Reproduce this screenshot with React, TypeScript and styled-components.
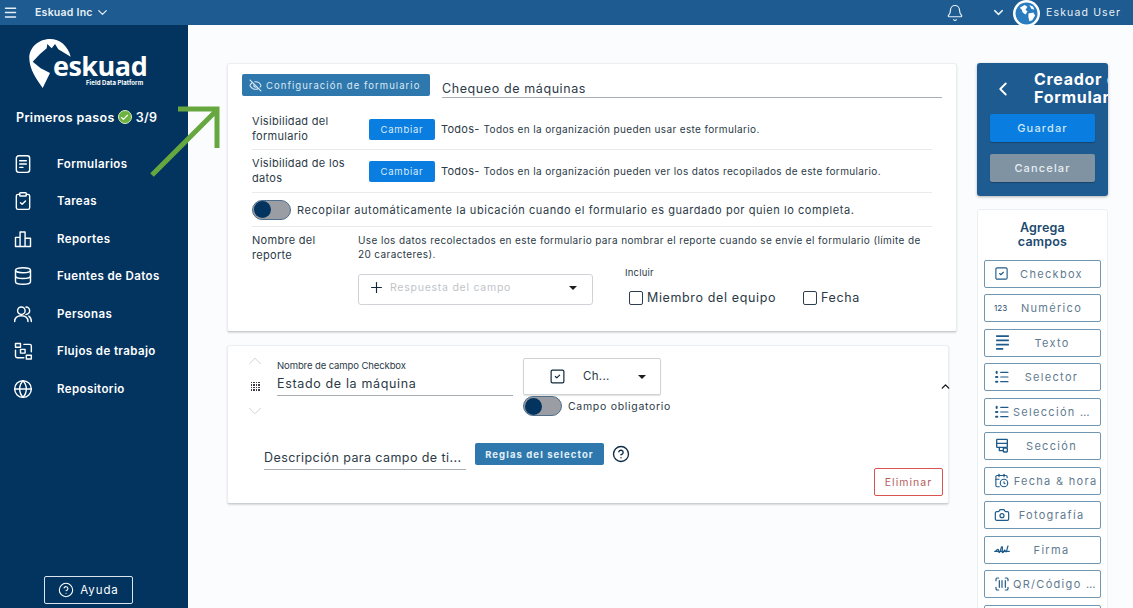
import React, { FC, ReactNode } from "react";
import styled, { createGlobalStyle } from "styled-components";
import {
  Bell,
  CalendarClock,
  Camera,
  Check,
  ChevronDown,
  ChevronLeft,
  ChevronUp,
  ClipboardCheck,
  CircleHelp,
  Database,
  EyeOff,
  Globe,
  Menu,
  Plus,
  ScanBarcode,
  SquareCheck,
} from "lucide-react";

const FONT = `Inter, "Open Sans", "Liberation Sans", sans-serif`;
const NAVY = "#03345f";
const STEEL = "#1e5b90";
const BRIGHT = "#0a7de0";

const GlobalStyle = createGlobalStyle`
  html, body {
    margin: 0;
    padding: 0;
    height: 608px;
    overflow: hidden;
    background: #fbfcfe;
    font-family: ${FONT};
    color: #2b3a47;
  }
  * { box-sizing: border-box; }
`;

const Page = styled.div`
  position: relative;
  width: 1133px;
  height: 608px;
  overflow: hidden;
`;

/* header */
const Header = styled.header`
  display: flex;
  align-items: center;
  height: 25px;
  padding: 0 13px 0 3px;
  background: ${STEEL};
  color: #e8f0f7;
`;

const Company = styled.span`
  margin-left: 17px;
  font-size: 10.5px;
  font-weight: 600;
  letter-spacing: 0.25px;
`;

const HeaderEnd = styled.div`
  display: flex;
  align-items: center;
  margin-left: auto;
`;

const Avatar = styled.div`
  display: flex;
  align-items: center;
  justify-content: center;
  width: 27px;
  height: 27px;
  margin: 2px 6px 0 7px;
  border-radius: 50%;
  background: #fff;
`;

const UserName = styled.span`
  font-size: 10.5px;
  letter-spacing: 1.15px;
  width: 74px;
  white-space: nowrap;
`;

/* layout */
const Body = styled.div`
  display: flex;
  height: 583px;
`;

const Sidebar = styled.aside`
  display: flex;
  flex-direction: column;
  flex: 0 0 188px;
  background: ${NAVY};
  color: #fff;
`;

const Brand = styled.div`
  display: flex;
  align-items: flex-start;
  height: 72px;
  padding: 12px 0 0 29px;
`;

const Wordmark = styled.div`
  display: flex;
  flex-direction: column;
  align-items: flex-end;
  margin: 15px 0 0 -19px;
`;

const BrandName = styled.span`
  font-family: "Open Sans", sans-serif;
  font-size: 27px;
  font-weight: 700;
  line-height: 27px;
  letter-spacing: -0.5px;
`;

const BrandTag = styled.span`
  margin-right: 4px;
  font-size: 6px;
  font-weight: 700;
  line-height: 7px;
  letter-spacing: 0.1px;
  white-space: nowrap;
`;

const Steps = styled.div`
  display: flex;
  align-items: center;
  gap: 3px;
  height: 20px;
  margin-top: 10px;
  padding-left: 16px;
  font-size: 12.5px;
  font-weight: 600;
  letter-spacing: 0.35px;
`;

const StepCheck = styled.span`
  display: flex;
  align-items: center;
  justify-content: center;
  width: 14px;
  height: 14px;
  margin-right: 1px;
  border-radius: 50%;
  background: #6cb33f;
  border: 1px solid #d6ecc7;
`;

const Nav = styled.nav`
  display: flex;
  flex-direction: column;
  margin-top: 18px;
`;

const NavItem = styled.div`
  display: flex;
  align-items: center;
  height: 37.5px;
  padding-left: 13px;
  font-size: 11.5px;
  font-weight: 600;
  letter-spacing: 0.4px;
`;

const NavIcon = styled.span`
  display: flex;
  width: 44px;
`;

const HelpButton = styled.div`
  display: flex;
  align-items: center;
  justify-content: center;
  gap: 6px;
  width: 89px;
  height: 28px;
  margin: auto 0 4px 44px;
  border: 1px solid #dbe5ee;
  border-radius: 2px;
  font-size: 11.5px;
  letter-spacing: 0.9px;
`;

const Content = styled.main`
  display: flex;
  flex: 1;
  min-width: 0;
  padding: 38px 0 0 39px;
`;

const FormColumn = styled.div`
  display: flex;
  flex-direction: column;
  gap: 13px;
  width: 730px;
`;

/* settings card */
const Card = styled.section<{ $width?: number }>`
  width: ${(p) => p.$width ?? 730}px;
  background: #fff;
  border-radius: 3px;
  border: 1px solid #eceff2;
  border-bottom-color: #c9ced3;
  box-shadow: 0 1px 2px rgba(0, 0, 0, 0.14);
`;

const SettingsCard = styled(Card)`
  height: 269px;
  padding: 10px 14px 0 14px;
`;

const TitleRow = styled.div`
  display: flex;
  align-items: flex-start;
  gap: 12px;
  height: 35px;
`;

const ConfigButton = styled.div`
  display: flex;
  align-items: center;
  gap: 4px;
  width: 188px;
  height: 22px;
  padding-left: 7px;
  border-radius: 2px;
  background: #2f78ad;
  color: #dceaf4;
  font-size: 9.5px;
  letter-spacing: 1.05px;
  white-space: nowrap;
`;

const TitleField = styled.div`
  flex: 1;
  height: 23.5px;
  padding-top: 7px;
  border-bottom: 1px solid #a9aeb3;
  font-size: 12.5px;
  line-height: 15px;
  letter-spacing: 0.6px;
`;

const SettingRow = styled.div<{ $height: number }>`
  display: flex;
  align-items: center;
  height: ${(p) => p.$height}px;
  margin: 0 10px;
  border-bottom: 1px solid #e8eaec;
`;

const SettingLabel = styled.div`
  width: 117px;
  font-size: 11px;
  line-height: 15px;
  letter-spacing: 0.3px;
`;

const ChangeButton = styled.div`
  display: flex;
  align-items: center;
  justify-content: center;
  width: 66px;
  height: 21px;
  border-radius: 2px;
  background: ${BRIGHT};
  color: #d8ebfb;
  font-size: 9.5px;
  letter-spacing: 0.75px;
`;

const AudienceName = styled.span`
  margin-left: 6px;
  font-size: 11px;
  letter-spacing: 0.25px;
`;

const AudienceText = styled.span`
  margin-left: 4px;
  font-size: 10px;
  letter-spacing: 0.36px;
  white-space: nowrap;
`;

const Track = styled.div`
  display: flex;
  align-items: center;
  flex: 0 0 39px;
  height: 20px;
  padding-left: 1px;
  border-radius: 10px;
  background: #9a9da3;
  border: 1px solid #4f6f8c;
`;

const Thumb = styled.div`
  width: 17px;
  height: 17px;
  border-radius: 50%;
  background: ${NAVY};
`;

const LocationText = styled.span`
  margin-left: 6px;
  font-size: 11px;
  letter-spacing: 0.56px;
  white-space: nowrap;
`;

const ReportRow = styled.div`
  display: flex;
  margin: 0 10px;
  padding-top: 6px;
`;

const ReportLabel = styled.div`
  flex: 0 0 106px;
  font-size: 11px;
  line-height: 15px;
  letter-spacing: 0.3px;
`;

const ReportBody = styled.div`
  display: flex;
  flex-direction: column;
  flex: 1;
  padding-right: 10px;
`;

const ReportHint = styled.p`
  margin: 0;
  font-size: 10px;
  line-height: 14px;
  letter-spacing: 0.38px;
`;

const ReportControls = styled.div`
  display: flex;
  margin-top: 5px;
`;

const FieldSelect = styled.div`
  display: flex;
  align-items: center;
  width: 235px;
  height: 31px;
  margin-top: 8px;
  padding: 0 15px 4px 9px;
  border: 1px solid #cfd3d7;
  border-radius: 3px;
  color: #c0c4c8;
  font-size: 10.5px;
  letter-spacing: 0.75px;
`;

const SelectText = styled.span`
  flex: 1;
  margin-left: 5px;
`;

const Caret = styled.span`
  width: 0;
  height: 0;
  border-left: 4px solid transparent;
  border-right: 4px solid transparent;
  border-top: 4px solid #1c1c1c;
`;

const IncludeBlock = styled.div`
  display: flex;
  flex-direction: column;
  margin-left: 32px;
`;

const IncludeLabel = styled.span`
  font-size: 9.5px;
  line-height: 14px;
  letter-spacing: 0.2px;
`;

const IncludeRow = styled.div`
  display: flex;
  align-items: center;
  margin: 10px 0 0 4px;
`;

const CheckOption = styled.span<{ $gap: number }>`
  display: flex;
  align-items: center;
  gap: 4px;
  margin-right: ${(p) => p.$gap}px;
  font-size: 12.5px;
  letter-spacing: 0.63px;
  white-space: nowrap;
`;

const CheckBoxMark = styled.span`
  width: 14px;
  height: 14px;
  border: 1.5px solid #2c3e50;
  border-radius: 2px;
`;

/* field card */
const FieldCard = styled(Card)`
  height: 159px;
  padding: 8px 0 0 20px;
`;

const FieldTop = styled.div`
  display: flex;
  height: 64px;
`;

const Handle = styled.div`
  display: flex;
  flex-direction: column;
  align-items: center;
  justify-content: space-between;
  flex: 0 0 22px;
  height: 72px;
  margin: -4px 0 0 -4px;
  color: #c9cfd4;
`;

const GripDots = styled.span`
  display: grid;
  grid-template-columns: repeat(4, 1.5px);
  grid-auto-rows: 1.5px;
  gap: 1px;
`;

const Dot = styled.span`
  background: #3b3f44;
`;

const NameField = styled.div`
  display: flex;
  flex-direction: column;
  width: 236px;
  height: 36px;
  margin: 6px 10px 0 11px;
  border-bottom: 1px solid #a9aeb3;
`;

const NameLabel = styled.span`
  font-size: 9.5px;
  line-height: 12px;
  letter-spacing: -0.1px;
`;

const NameValue = styled.span`
  margin-top: 4px;
  font-size: 12.5px;
  line-height: 16px;
  letter-spacing: 0.65px;
`;

const TypeColumn = styled.div`
  display: flex;
  flex-direction: column;
  width: 150px;
  margin-top: 4px;
`;

const TypeSelect = styled.div`
  display: flex;
  align-items: center;
  width: 138px;
  height: 37px;
  padding: 0 14px 0 25px;
  border: 1px solid #d0d3d6;
  border-radius: 2px;
  box-shadow: 0 1px 1px rgba(0, 0, 0, 0.12);
  font-size: 11.5px;
  letter-spacing: 0.3px;
`;

const TypeText = styled.span`
  flex: 1;
  margin: -2px 0 0 17px;
`;

const RequiredRow = styled.div`
  display: flex;
  align-items: center;
  margin-top: 1px;
  font-size: 10.5px;
  letter-spacing: 0.7px;
  white-space: nowrap;
`;

const RequiredText = styled.span`
  margin-left: 6px;
`;

const Collapse = styled.span`
  display: flex;
  margin: 26px -4px 0 auto;
  color: #111;
`;

const DescRow = styled.div`
  display: flex;
  align-items: flex-start;
  margin-top: 25px;
  padding-left: 16px;
`;

const DescField = styled.div`
  width: 202px;
  height: 27px;
  padding-top: 7px;
  border-bottom: 1px solid #a9aeb3;
  font-size: 12.5px;
  line-height: 15px;
  letter-spacing: 0.42px;
  white-space: nowrap;
  overflow: hidden;
`;

const RulesButton = styled.div`
  display: flex;
  align-items: center;
  justify-content: center;
  width: 129px;
  height: 22px;
  margin: 0 8px 0 9px;
  border-radius: 2px;
  background: #2f78ad;
  color: #e4f0f8;
  font-size: 9.5px;
  font-weight: 700;
  letter-spacing: 1.1px;
`;

const HelpMark = styled.span`
  display: flex;
  margin-top: 2px;
  color: #0f2c46;
`;

const FieldFoot = styled.div`
  display: flex;
  justify-content: flex-end;
  margin-top: -2px;
  padding-right: 5px;
`;

const DeleteButton = styled.div`
  display: flex;
  align-items: center;
  justify-content: center;
  width: 69px;
  height: 28px;
  border: 1px solid #d9534f;
  border-radius: 2px;
  color: #b5605d;
  font-size: 10.5px;
  letter-spacing: 1.05px;
`;

/* right column */
const Tools = styled.aside`
  display: flex;
  flex-direction: column;
  flex: 0 0 131px;
  min-width: 0;
  gap: 13px;
  margin-left: 20px;
`;

const BuilderPanel = styled.div`
  display: flex;
  flex-direction: column;
  flex-shrink: 0;
  height: 133px;
  overflow: hidden;
  padding: 8px 13px 0;
  background: ${STEEL};
  border-radius: 3px;
  box-shadow: 0 1px 3px rgba(0, 0, 0, 0.3);
  color: #fff;
`;

const BuilderHead = styled.div`
  display: flex;
  align-items: center;
  height: 36px;
  margin-bottom: 7px;
`;

const BuilderTitle = styled.div`
  margin: -2px 0 0 20px;
  font-size: 16px;
  font-weight: 700;
  line-height: 18px;
  letter-spacing: 0.7px;
  white-space: nowrap;
`;

const PanelButton = styled.div<{ $primary?: boolean }>`
  display: flex;
  align-items: center;
  justify-content: center;
  flex: 0 0 28px;
  margin-bottom: 12px;
  border-radius: 2px;
  background: ${(p) => (p.$primary ? BRIGHT : "#7f93a3")};
  box-shadow: 0 1px 1px rgba(0, 0, 0, 0.25);
  color: ${(p) => (p.$primary ? "#cfe8fb" : "#e8edf1")};
  font-size: 11px;
  font-weight: 500;
  letter-spacing: 1.15px;
`;

const AddCard = styled.div`
  display: flex;
  flex-direction: column;
  flex-shrink: 0;
  gap: 6.5px;
  height: 420px;
  padding: 11px 6px 0;
  background: #fff;
  border: 1px solid #eceff2;
  border-radius: 3px;
`;

const AddTitle = styled.h3`
  margin: 0 0 4px;
  color: #1c4a70;
  font-size: 12.5px;
  font-weight: 600;
  line-height: 14px;
  text-align: center;
  letter-spacing: 0.2px;
`;

const ToolButton = styled.div`
  display: flex;
  align-items: center;
  flex: 0 0 28px;
  padding: 0 2px 0 9px;
  border: 1.5px solid #6f97b4;
  border-radius: 2px;
  color: #1f5b8a;
`;

const ToolIcon = styled.span`
  display: flex;
  align-items: center;
  flex: 0 0 16px;
`;

const NumberIcon = styled.span`
  font-size: 8px;
  color: #1f4a6d;
`;

const ToolLabel = styled.span<{ $long?: boolean }>`
  flex: 1;
  min-width: 0;
  margin-left: 3px;
  padding-right: ${(p) => (p.$long ? 0 : 8)}px;
  color: #5f7b90;
  font-size: 11px;
  letter-spacing: 1.3px;
  text-align: center;
  white-space: nowrap;
  overflow: hidden;
  text-overflow: ellipsis;
`;

const ArrowOverlay = styled.svg`
  position: absolute;
  left: 148px;
  top: 104px;
`;

/* drawn icons */
const Svg: FC<{ size?: number; width?: number; children: ReactNode }> = ({ size = 20, width = 1.7, children }) => (
  <svg width={size} height={size} viewBox="0 0 24 24" fill="none" stroke="currentColor" strokeWidth={width} strokeLinecap="round" strokeLinejoin="round">
    {children}
  </svg>
);

const FormIcon = () => (
  <Svg>
    <rect x="4" y="2" width="16" height="20" rx="3" />
    <path d="M8 8h8M8 12h8M8 16h4" />
  </Svg>
);

const ChartIcon = () => (
  <Svg>
    <path d="M3 21V10h5.500v11M8.500 21V3.500h6V21M14.500 21V11H21v10zM3 21h18" />
  </Svg>
);

const PeopleIcon = () => (
  <Svg>
    <circle cx="10" cy="8" r="4.500" />
    <path d="M2 21c0-4.500 3.400-7 8-7s8 2.500 8 7M15.500 3.500a4.500 4.500 0 0 1 0 9M19 14.500c1.800 1.200 3 3.300 3 6.500" />
  </Svg>
);

const FlowIcon = () => (
  <Svg>
    <rect x="3" y="3" width="6" height="4.500" />
    <rect x="9" y="10" width="5.500" height="4.500" />
    <rect x="16" y="17" width="6" height="4.500" />
    <path d="M13 4h7a2 2 0 0 1 2 2v7M3 11v7a2 2 0 0 0 2 2h8" />
  </Svg>
);

const Logo = () => (
  <svg width="43" height="52" viewBox="0 0 43 52">
    <path
      fill="#fff"
      d="M41.700 19.700C39 9 31 2 21 2 9 2 0.300 11 0.300 21c0 11 7 21 13.400 30L21 36l-9.300-4.700L3.700 24.700 11 17l6.700-5.700.6-4.300 4.400 4.300L26 7l3.300 5.300z"
    />
  </svg>
);

const EarthAvatar = () => (
  <svg width="23" height="23" viewBox="0 0 24 24">
    <circle cx="12" cy="12" r="11.500" fill="#2a7cc0" />
    <path fill="#fff" d="M5 6l5-3 3 2-2 3 2 2-2 3-3-2-1-3zM14 12l5-1 2 3-3 5-3 1-1-4zM15 3l4 2 1 3-3-1z" />
  </svg>
);

const ListIcon = () => (
  <Svg size={16}>
    <path d="M10 5h11M10 12h11M10 19h11" />
    <path d="M4 4v2M3 12h2M3 19h2" strokeWidth={3} />
  </Svg>
);

const TextIcon = () => (
  <Svg size={17} width={2.6}>
    <path d="M3 3h18M3 9h18M3 15h18M3 21h10" strokeLinecap="butt" />
  </Svg>
);

const SectionIcon = () => (
  <Svg size={16} width={2}>
    <rect x="4" y="2" width="16" height="12" rx="1" />
    <path d="M4 8h16M8 14v5h6" />
    <rect x="14" y="15" width="6" height="6" rx="1" />
  </Svg>
);

const SignIcon = () => (
  <Svg size={16} width={1.8}>
    <path d="M1 14c3 0 3-3 5-3s0 5 2 5 2-9 4-9-1 9 1 9 2-4 3-4 1 3 2 3 2-7 3-9M1 14h22" />
  </Svg>
);

const navItems: { label: string; icon: ReactNode }[] = [
  { label: "Formularios", icon: <FormIcon /> },
  { label: "Tareas", icon: <ClipboardCheck size={20} strokeWidth={1.7} /> },
  { label: "Reportes", icon: <ChartIcon /> },
  { label: "Fuentes de Datos", icon: <Database size={20} strokeWidth={1.7} /> },
  { label: "Personas", icon: <PeopleIcon /> },
  { label: "Flujos de trabajo", icon: <FlowIcon /> },
  { label: "Repositorio", icon: <Globe size={20} strokeWidth={1.7} /> },
];

const fieldTypes: { label: string; icon: ReactNode; long?: boolean }[] = [
  { label: "Checkbox", icon: <SquareCheck size={15} strokeWidth={1.8} /> },
  { label: "Numérico", icon: <NumberIcon>123</NumberIcon> },
  { label: "Texto", icon: <TextIcon /> },
  { label: "Selector", icon: <ListIcon /> },
  { label: "Selección múltiple", icon: <ListIcon />, long: true },
  { label: "Sección", icon: <SectionIcon /> },
  { label: "Fecha & hora", icon: <CalendarClock size={15} strokeWidth={1.8} />, long: true },
  { label: "Fotografía", icon: <Camera size={16} strokeWidth={1.8} /> },
  { label: "Firma", icon: <SignIcon /> },
  { label: "QR/Código de barras", icon: <ScanBarcode size={16} strokeWidth={1.8} />, long: true },
  { label: "Ubicación", icon: <Globe size={16} strokeWidth={1.8} /> },
];

const App: FC = () => (
  <Page>
    <GlobalStyle />
    <Header>
      <Menu size={15} strokeWidth={2.4} />
      <Company>Eskuad Inc</Company>
      <ChevronDown size={15} strokeWidth={2} style={{ marginLeft: 2 }} />
      <HeaderEnd>
        <Bell size={18} strokeWidth={1.6} />
        <ChevronDown size={15} strokeWidth={2.4} style={{ marginLeft: 27 }} />
        <Avatar>
          <EarthAvatar />
        </Avatar>
        <UserName>Eskuad User</UserName>
      </HeaderEnd>
    </Header>
    <Body>
      <Sidebar>
        <Brand>
          <Logo />
          <Wordmark>
            <BrandName>eskuad</BrandName>
            <BrandTag>Field Data Platform</BrandTag>
          </Wordmark>
        </Brand>
        <Steps>
          Primeros pasos
          <StepCheck>
            <Check size={9} strokeWidth={3} />
          </StepCheck>
          3/9
        </Steps>
        <Nav>
          {navItems.map((item) => (
            <NavItem key={item.label}>
              <NavIcon>{item.icon}</NavIcon>
              {item.label}
            </NavItem>
          ))}
        </Nav>
        <HelpButton>
          <CircleHelp size={16} strokeWidth={1.6} />
          Ayuda
        </HelpButton>
      </Sidebar>
      <Content>
        <FormColumn>
          <SettingsCard>
            <TitleRow>
              <ConfigButton>
                <EyeOff size={13} strokeWidth={2} />
                Configuración de formulario
              </ConfigButton>
              <TitleField>Chequeo de máquinas</TitleField>
            </TitleRow>
            <SettingRow $height={41}>
              <SettingLabel>
                Visibilidad del
                <br />
                formulario
              </SettingLabel>
              <ChangeButton>Cambiar</ChangeButton>
              <AudienceName>Todos-</AudienceName>
              <AudienceText>Todos en la organización pueden usar este formulario.</AudienceText>
            </SettingRow>
            <SettingRow $height={43}>
              <SettingLabel>
                Visibilidad de los
                <br />
                datos
              </SettingLabel>
              <ChangeButton>Cambiar</ChangeButton>
              <AudienceName>Todos-</AudienceName>
              <AudienceText>Todos en la organización pueden ver los datos recopilados de este formulario.</AudienceText>
            </SettingRow>
            <SettingRow $height={34}>
              <Track>
                <Thumb />
              </Track>
              <LocationText>Recopilar automáticamente la ubicación cuando el formulario es guardado por quien lo completa.</LocationText>
            </SettingRow>
            <ReportRow>
              <ReportLabel>
                Nombre del
                <br />
                reporte
              </ReportLabel>
              <ReportBody>
                <ReportHint>
                  Use los datos recolectados en este formulario para nombrar el reporte cuando se envíe el formulario (límite de 20 caracteres).
                </ReportHint>
                <ReportControls>
                  <FieldSelect>
                    <Plus size={17} strokeWidth={1.6} color="#12283c" />
                    <SelectText>Respuesta del campo</SelectText>
                    <Caret />
                  </FieldSelect>
                  <IncludeBlock>
                    <IncludeLabel>Incluir</IncludeLabel>
                    <IncludeRow>
                      <CheckOption $gap={27}>
                        <CheckBoxMark />
                        Miembro del equipo
                      </CheckOption>
                      <CheckOption $gap={0}>
                        <CheckBoxMark />
                        Fecha
                      </CheckOption>
                    </IncludeRow>
                  </IncludeBlock>
                </ReportControls>
              </ReportBody>
            </ReportRow>
          </SettingsCard>
          <FieldCard $width={722}>
            <FieldTop>
              <Handle>
                <ChevronUp size={22} strokeWidth={1} />
                <GripDots>
                  {Array.from({ length: 16 }).map((_, i) => (
                    <Dot key={i} />
                  ))}
                </GripDots>
                <ChevronDown size={22} strokeWidth={1} />
              </Handle>
              <NameField>
                <NameLabel>Nombre de campo Checkbox</NameLabel>
                <NameValue>Estado de la máquina</NameValue>
              </NameField>
              <TypeColumn>
                <TypeSelect>
                  <SquareCheck size={17} strokeWidth={1.7} color="#12283c" />
                  <TypeText>Ch...</TypeText>
                  <Caret />
                </TypeSelect>
                <RequiredRow>
                  <Track>
                    <Thumb />
                  </Track>
                  <RequiredText>Campo obligatorio</RequiredText>
                </RequiredRow>
              </TypeColumn>
              <Collapse>
                <ChevronUp size={13} strokeWidth={2.4} />
              </Collapse>
            </FieldTop>
            <DescRow>
              <DescField>Descripción para campo de ti...</DescField>
              <RulesButton>Reglas del selector</RulesButton>
              <HelpMark>
                <CircleHelp size={18} strokeWidth={1.8} />
              </HelpMark>
            </DescRow>
            <FieldFoot>
              <DeleteButton>Eliminar</DeleteButton>
            </FieldFoot>
          </FieldCard>
        </FormColumn>
        <Tools>
          <BuilderPanel>
            <BuilderHead>
              <ChevronLeft size={22} strokeWidth={2} style={{ flex: "0 0 22px", marginLeft: 2 }} />
              <BuilderTitle>
                Creador de
                <br />
                Formularios
              </BuilderTitle>
            </BuilderHead>
            <PanelButton $primary>Guardar</PanelButton>
            <PanelButton>Cancelar</PanelButton>
          </BuilderPanel>
          <AddCard>
            <AddTitle>
              Agrega
              <br />
              campos
            </AddTitle>
            {fieldTypes.map((field) => (
              <ToolButton key={field.label}>
                <ToolIcon>{field.icon}</ToolIcon>
                <ToolLabel $long={field.long}>{field.label}</ToolLabel>
              </ToolButton>
            ))}
          </AddCard>
        </Tools>
      </Content>
    </Body>
    <ArrowOverlay width="76" height="76" viewBox="0 0 76 76" fill="none" stroke="#66a83f" strokeWidth="5">
      <path d="M4 71 L69 6 M30 5 H69 V44" />
    </ArrowOverlay>
  </Page>
);

export default App;
